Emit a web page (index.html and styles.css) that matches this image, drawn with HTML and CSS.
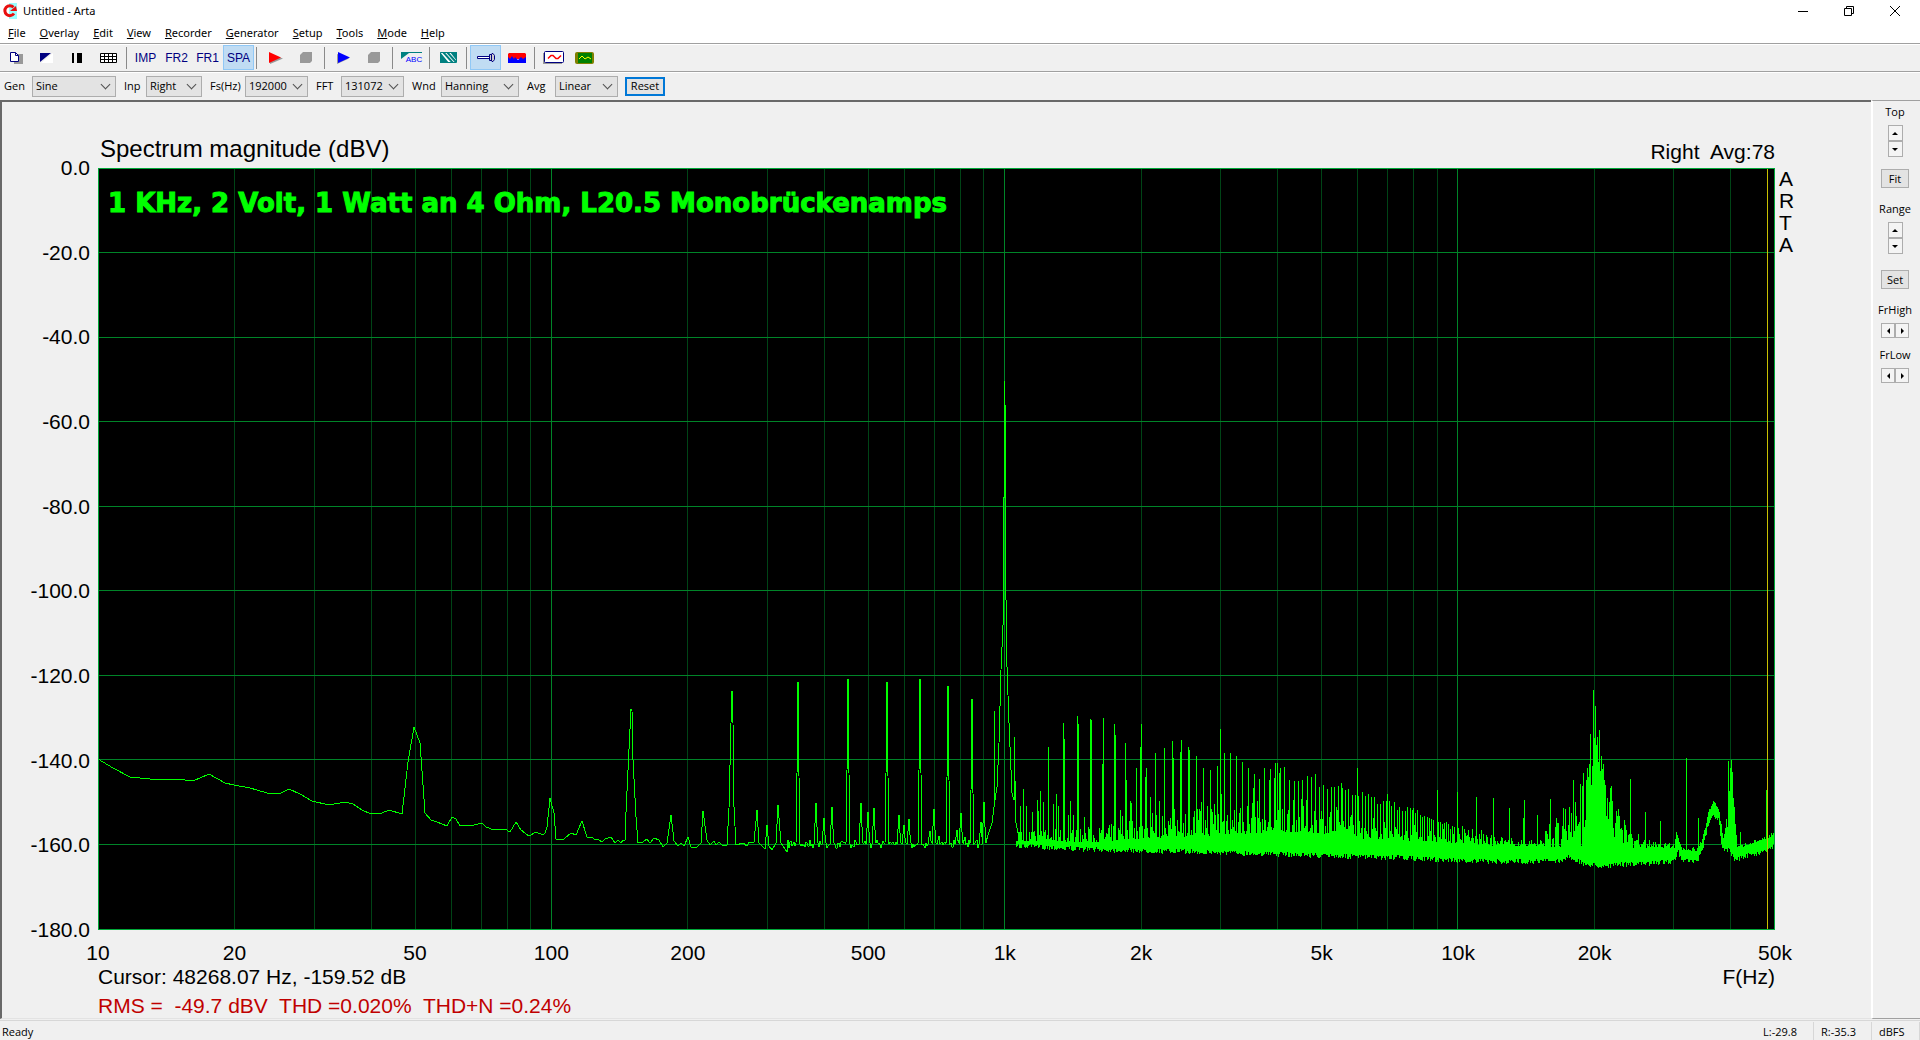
FILE: index.html
```html
<!DOCTYPE html>
<html lang="en">
<head>
<meta charset="utf-8">
<title>Untitled - Arta</title>
<link rel="stylesheet" href="styles.css">
</head>
<body>
<header class="titlebar">
  <svg class="app-icon" width="16" height="16" viewBox="0 0 16 16"><path fill="#9ff" d="M7 0h8v16H7z"/><path d="M11.500 4.200A5 5 0 1 0 12 10.500" fill="none" stroke="#e81010" stroke-width="3"/><path fill="#e81010" d="M8 8h7l-1-5z"/></svg>
  <h1>Untitled - Arta</h1>
  <div class="window-controls">
    <button aria-label="Minimize"><svg width="12" height="12" viewBox="0 0 12 12"><path d="M1 6.500h10"/></svg></button>
    <button aria-label="Restore"><svg width="12" height="12" viewBox="0 0 12 12"><path d="M1.500 3.500h7v7h-7zM3.500 3.500v-2h7v7h-2"/></svg></button>
    <button aria-label="Close"><svg width="12" height="12" viewBox="0 0 12 12"><path d="M1 1l10 10M11 1L1 11"/></svg></button>
  </div>
</header>
<nav class="menubar">
  <button><u>F</u>ile</button><button><u>O</u>verlay</button><button><u>E</u>dit</button><button><u>V</u>iew</button><button><u>R</u>ecorder</button><button><u>G</u>enerator</button><button><u>S</u>etup</button><button><u>T</u>ools</button><button><u>M</u>ode</button><button><u>H</u>elp</button>
</nav>
<div class="toolbar" role="toolbar">
  <button aria-label="Copy"><svg width="14" height="13" viewBox="0 0 14 13"><path fill="#999" d="M5 3h9v10H5z"/><path fill="#fff" stroke="#000080" d="M1.500 1.500h5l3 3v6h-8z"/><path fill="none" stroke="#000080" d="M6.500 1.500v3h3"/></svg></button>
  <button aria-label="Background"><svg width="14" height="10" viewBox="0 0 14 10"><path fill="#fff" d="M13 0v10H1z"/><path fill="#000080" d="M0 0h11L0 9z"/></svg></button>
  <button aria-label="Line width"><svg width="12" height="10" viewBox="0 0 12 10"><path d="M0 0h2v10H0zM5 0h5v10H5z"/></svg></button>
  <button aria-label="Grid"><svg width="17" height="10" viewBox="0 0 17 10"><path fill="#fff" stroke="#000" d="M.5.500h16v9H.500zM.500 3.500h16M.500 6.500h16M4.500.500v9M8.500.500v9M12.500.500v9"/></svg></button>
  <i class="sep"></i>
  <button>IMP</button><button>FR2</button><button>FR1</button><button class="on">SPA</button>
  <i class="sep"></i>
  <button aria-label="Record"><svg width="15" height="12" viewBox="0 0 15 12"><path fill="#999" d="M2 12V2l13 4.500z"/><path fill="red" d="M1 0l12 5.500L1 11z"/></svg></button>
  <button aria-label="Stop recording"><svg width="13" height="11" viewBox="0 0 13 11"><path fill="#999" d="M3 0h9v9l-2 2H0V3z"/></svg></button>
  <i class="sep"></i>
  <button aria-label="Generate"><svg width="13" height="12" viewBox="0 0 13 12"><path fill="#999" d="M0 12V2l12 4.500z"/><path fill="#00f" d="M1 0l12 5.500L1 11z"/></svg></button>
  <button aria-label="Stop generator"><svg width="13" height="11" viewBox="0 0 13 11"><path fill="#999" d="M3 0h9v9l-2 2H0V3z"/></svg></button>
  <i class="sep"></i>
  <button class="label-tool" aria-label="Caption"><svg width="21" height="12" viewBox="0 0 21 12"><path fill="#008080" d="M0 0h21v1H8L0 7z"/></svg><span>ABC</span></button>
  <i class="sep"></i>
  <button aria-label="Smoothing"><svg width="17" height="11" viewBox="0 0 17 11"><path fill="#fff" stroke="#008080" d="M.5.500h16v10H.500z"/><path fill="#008080" d="M0 0v11h9zM10 0h7v9z"/><path stroke="#008080" stroke-width="2" d="M3 0l10 11M7 0l9 10"/></svg></button>
  <i class="sep"></i>
  <button class="on" aria-label="Input"><svg width="18" height="9" viewBox="0 0 18 9"><path fill="#fff" stroke="#000080" d="M.5 3.500h12v2H.500z"/><path fill="#ccc" stroke="#000080" d="M14 1.500l1-1h1l1.500 2v4l-1.500 2h-1l-1-1h-1.500v-6zM14.500 1v7"/></svg></button>
  <button aria-label="Spectrum fill"><svg width="18" height="10" viewBox="0 0 18 10"><path fill="red" d="M1 0h16l1 1v5H0V1z"/><path fill="#00f" d="M0 4l2 2 2-3 2 3 1-2 3 3 3-3 2 2 3-2v6H0z"/></svg></button>
  <i class="sep"></i>
  <button aria-label="Signal time record"><svg width="21" height="13" viewBox="0 0 21 13"><path fill="#999" d="M0 2h19v11H0z"/><rect x="1.500" y=".5" width="19" height="11" rx="1" fill="#fff" stroke="#000080"/><path fill="none" stroke="red" stroke-width="1.500" d="M5 7.500l3-3h2l3 3h2l3-3"/></svg></button>
  <button aria-label="Oscilloscope"><svg width="19" height="12" viewBox="0 0 19 12"><rect width="19" height="12" rx="2" fill="#808000"/><rect x="3" y="1" width="14" height="10" fill="#008000"/><path fill="none" stroke="#ff0" d="M4 7l3-3 3 3 3-2 3 2"/></svg></button>
</div>
<form class="settings">
  <label for="gen">Gen</label><span class="drop"><select id="gen"><option>Sine</option></select></span>
  <label for="inp">Inp</label><span class="drop"><select id="inp"><option>Right</option></select></span>
  <label for="fs">Fs(Hz)</label><span class="drop"><select id="fs"><option>192000</option></select></span>
  <label for="fft">FFT</label><span class="drop"><select id="fft"><option>131072</option></select></span>
  <label for="wnd">Wnd</label><span class="drop"><select id="wnd"><option>Hanning</option></select></span>
  <label for="avg">Avg</label><span class="drop"><select id="avg"><option>Linear</option></select></span>
  <button class="reset" type="button">Reset</button>
</form>
<main class="workspace">
  <section class="chart">
    <div class="chart-head"><h2>Spectrum magnitude (dBV)</h2><p>Right&nbsp; Avg:78</p></div>
    <ul class="y-axis"><li>0.0</li><li>-20.0</li><li>-40.0</li><li>-60.0</li><li>-80.0</li><li>-100.0</li><li>-120.0</li><li>-140.0</li><li>-160.0</li><li>-180.0</li></ul>
    <div class="plot">
      <svg id="spectrum" viewBox="98 168 1677 762" preserveAspectRatio="none"></svg>
      <p class="caption">1 KHz, 2 Volt, 1 Watt an 4 Ohm, L20.5 Monobrückenamps</p>
    </div>
    <p class="brand">A<br>R<br>T<br>A</p>
    <div class="chart-foot">
      <ul class="x-axis"><li>10</li><li>20</li><li>50</li><li>100</li><li>200</li><li>500</li><li>1k</li><li>2k</li><li>5k</li><li>10k</li><li>20k</li><li>50k</li></ul>
      <div class="cursor"><p>Cursor: 48268.07 Hz, -159.52 dB</p><p>F(Hz)</p></div>
      <p class="readout">RMS =&nbsp; -49.7 dBV&nbsp; THD =0.020%&nbsp; THD+N =0.24%</p>
    </div>
  </section>
  <aside class="side">
    <p>Top</p>
    <div class="spin"><button aria-label="Top up"><i class="up"></i></button><button aria-label="Top down"><i class="down"></i></button></div>
    <button class="push">Fit</button>
    <p>Range</p>
    <div class="spin range"><button aria-label="Range up"><i class="up"></i></button><button aria-label="Range down"><i class="down"></i></button></div>
    <button class="push">Set</button>
    <p>FrHigh</p>
    <div class="spin across"><button aria-label="High limit down"><i class="left"></i></button><button aria-label="High limit up"><i class="right"></i></button></div>
    <p>FrLow</p>
    <div class="spin across"><button aria-label="Low limit down"><i class="left"></i></button><button aria-label="Low limit up"><i class="right"></i></button></div>
  </aside>
</main>
<footer class="status"><span>Ready</span><span>L:-29.8</span><span>R:-35.3</span><span>dBFS</span></footer>
<script src="spectrum.js"></script>
</body>
</html>
```
FILE: styles.css
```css
* { box-sizing: border-box; margin: 0; padding: 0; }
body { min-height: 100vh; display: flex; flex-direction: column; background: #f0f0f0; color: #000; font: 11px/14px "Open Sans", "Noto Sans", sans-serif; }
button { font: inherit; color: inherit; background: none; border: 0; }
ul { list-style: none; }
svg { display: block; }
i { font-style: normal; }

.titlebar { display: flex; align-items: center; height: 22px; padding-left: 2px; background: #fff; font-family: "Noto Sans", sans-serif; }
.titlebar h1 { flex: 1; padding-left: 5px; font: inherit; }
.window-controls { display: flex; padding-right: 2px; }
.window-controls button { display: flex; align-items: center; justify-content: center; width: 46px; height: 22px; }
.window-controls svg { fill: none; stroke: #000; }
.menubar { display: flex; height: 21px; padding-left: 1px; background: #fff; font-family: "Noto Sans", sans-serif; }
.menubar button { padding: 0 7px; }

.toolbar { display: flex; align-items: center; height: 28px; border-top: 1px solid #a0a0a0; box-shadow: inset 0 1px #fff; }
.toolbar button { display: flex; align-items: center; justify-content: center; width: 31px; height: 25px; color: #000080; font: 12px/14px "Liberation Sans", Arial, sans-serif; }
.toolbar .on { background: #c0dcf3; border: 1px solid #90c8f6; }
.sep { width: 1px; height: 22px; margin: 0 3px 0 2px; background: #8a8a8a; }
.toolbar .label-tool { display: grid; place-content: center; }
.label-tool svg, .label-tool span { grid-area: 1 / 1; }
.label-tool span { padding: 3px 0 0 5px; color: #00f; font-size: 8px; line-height: 9px; }

.settings { display: grid; grid-template-columns: 32px 84px 30px 56px 43px 63px 33px 63px 37px 78px 36px 63px 47px; align-items: center; height: 29px; border-top: 1px solid #a0a0a0; box-shadow: inset 0 1px #fff; }
.settings label { padding-left: 8px; }
.settings label:first-child { padding-left: 4px; }
.drop { position: relative; }
.drop::after { content: ""; position: absolute; right: 7px; top: 5px; width: 6px; height: 6px; border: solid #505050; border-width: 0 1px 1px 0; transform: rotate(45deg); pointer-events: none; }
.drop select { display: block; width: 100%; height: 21px; padding-left: 3px; appearance: none; background: #e3e3e3; border: 1px solid #adadad; border-radius: 0; color: #000; font: inherit; }
.reset { height: 19px; margin-left: 7px; background: #e3e3e3; border: 2px solid #0078d7; line-height: 14px; }

.workspace { flex: 1; display: flex; }
.chart { flex: 1; display: grid; grid-template: 66px 1fr 88px / 96px 1fr 96px; border: 1px solid #a0a0a0; border-top: 2px solid #696969; border-left: 2px solid #696969; border-right: 0; border-bottom-color: #e3e3e3; font: 21px/24px "Liberation Sans", Arial, sans-serif; }
.chart-head { grid-column: 2; display: flex; justify-content: space-between; align-items: flex-end; padding: 0 0 4px 2px; }
.chart-head h2 { padding-bottom: 2px; font: 24px/26px "Liberation Sans", Arial, sans-serif; }
.y-axis { grid-area: 2 / 1; display: flex; flex-direction: column; justify-content: space-between; padding-right: 8px; text-align: right; }
.y-axis li { display: flex; align-items: center; justify-content: flex-end; height: 0; }
.plot { position: relative; grid-area: 2 / 2; background: #000; }
.plot svg { position: absolute; width: 100%; height: 100%; shape-rendering: crispEdges; }
.plot path { fill: none; stroke: #00ff00; vector-effect: non-scaling-stroke; }
.plot .minor { stroke: #004416; }
.plot .major { stroke: #008428; }
.plot .frame { stroke: #00a838; }
.plot .marker { stroke: #c8c000; }
.caption { position: relative; padding: 18px 0 0 10px; color: #00ff00; font: bold 26px/34px "DejaVu Sans", sans-serif; -webkit-text-stroke: 1px #00ff00; }
.brand { grid-area: 2 / 3; padding-left: 4px; line-height: 22px; }
.chart-foot { grid-column: 2; padding-top: 11px; }
.x-axis { display: grid; grid-template-columns: 301fr 398fr 301fr 301fr 398fr 301fr 301fr 398fr 301fr 301fr 398fr 0fr; }
.x-axis li { display: flex; justify-content: center; width: 0; }
.cursor { display: flex; justify-content: space-between; }
.readout { padding-top: 5px; color: #c00000; }

.side { display: flex; flex-direction: column; align-items: center; width: 49px; padding: 4px 3px 0 0; border: solid #a0a0a0; border-width: 1px 0; border-left: 2px solid #fff; }
.side p { height: 20px; }
.spin { display: flex; flex-direction: column; margin-bottom: 12px; }
.spin.range { margin-bottom: 16px; }
.spin.across { flex-direction: row; margin-bottom: 10px; }
.spin button { display: flex; align-items: center; justify-content: center; width: 15px; height: 16px; background: #f4f4f4; border: 1px solid #adadad; }
.spin.across button { width: 14px; height: 15px; }
.spin i { border: 3px solid transparent; }
.spin .up { border-top: 0; border-bottom-color: #000; }
.spin .down { border-bottom: 0; border-top-color: #000; }
.spin .left { border-left: 0; border-right-color: #000; }
.spin .right { border-right: 0; border-left-color: #000; }
.push { width: 28px; height: 19px; margin-bottom: 14px; background: #e3e3e3; border: 1px solid #adadad; line-height: 14px; }

.status { display: flex; align-items: center; height: 20px; margin-top: 1px; border-top: 1px solid #d7d7d7; }
.status span { width: 58px; height: 18px; padding-left: 7px; border-right: 1px solid #d7d7d7; line-height: 20px; }
.status span:first-child { flex: 1; padding-left: 2px; border: 0; }
.status span:last-child { width: 48px; }
```
FILE: spectrum.js
```js
const svg = document.getElementById('spectrum');
const LEFT = 98, RIGHT = 1774, TOP = 168, BOTTOM = 929;

function path(d, cls) {
  const p = document.createElementNS('http://www.w3.org/2000/svg', 'path');
  p.setAttribute('d', d);
  p.setAttribute('class', cls);
  svg.append(p);
}
const xOf = f => Math.round(LEFT + (RIGHT - LEFT) * Math.log10(f / 10) / Math.log10(5000)) + 0.5;

// Grid
let minor = '', major = '';
for (let dec = 10; dec <= 10000; dec *= 10) {
  for (let k = 1; k < 10 && k * dec < 50000; k++) {
    const line = `M${xOf(k * dec)} ${TOP}V${BOTTOM}`;
    if (k === 1) major += line; else minor += line;
  }
}
for (let i = 1; i < 9; i++) major += `M${LEFT} ${Math.floor(TOP + i * 84.55) + 0.5}H${RIGHT}`;
path(minor, 'minor');
path(major, 'major');

// Repeatable noise
let seed = 7;
const rnd = () => (seed = (seed * 16807) % 2147483647) / 2147483647;
const lerp = (pts, x) => {
  let i = 1;
  while (i < pts.length - 1 && pts[i][0] < x) i++;
  const [a, b] = [pts[i - 1], pts[i]];
  return a[1] + (b[1] - a[1]) * (x - a[0]) / (b[0] - a[0]);
};
const pairs = s => s.trim().split(/\s+/).map(p => p.split(',').map(Number));

// Low frequencies: single line
const low = pairs(`98,759 113,768 130,777 150,779 177,779 193,781 209,774 225,783 234,785 250,788 267,793 279,794
289,789 300,794 312,801 329,805 345,802 353,804 362,810 371,814 382,813 389,810 402,814 408,762 414,727 420,743
425,813 431,820 437,822 447,826 452,817 456,819 460,826 474,825 482,823 486,827 494,830 498,829 502,830 505,829
510,832 516,822 521,830 529,836 536,832 543,835 545,833 547,827 550,798 554,813 556,839 564,839 571,833 576,835
582,821 587,837 592,837 595,840 598,839 602,842 605,839 611,837 615,843 618,840 621,843 623,840 625,841 626,812
629,749 631,709 632,711 633,760 636,817 638,843 643,842 647,839 650,843 654,838 659,840 663,847 667,843 671,815
674,841 678,846 681,843 684,846 688,837 691,847 697,847 701,843 703,811 707,840 710,845 714,841 716,845 719,842
722,845 727,845 729,808 731,723 732,691 733,723 734,807 736,845 743,843 747,846 749,842 754,842 757,810 759,843
765,849 767,825 769,846 772,850 776,843 778,805 781,843 787,852`);
let d = 'M' + low.map(p => p.join(' ')).join('L');

const mid = pairs(`798,682 816,803 824,818 832,807 848,679 861,803 868,812 874,808 887,682 899,815 904,825 909,819
920,679 930,831 934,809 939,836 948,686 957,830 961,813 965,837 972,699 981,822 984,802`);
let x = 788;
for (const [px, py] of mid) {
  for (; x < px - 2; x++) d += `L${x} ${Math.round(844 + (rnd() - 0.5) * 9)}`;
  const w = py < 700 ? 2 : 1;
  d += `L${px - 2} 844`;
  if (w === 2) d += `L${px - 1} ${py + 92}`;
  d += `L${px} ${py}V${py + 8}`;
  d += w === 2 ? `L${px + 1} ${py + 94}L${px + 2} 844` : `L${px + 2} 843`;
  x = px + 3;
}
d += 'L986 842L988 835L992 823L994 807V711L995 800L997 787L999 743L1001 670';
d += 'L1003 625V497L1004 497V381L1005 405V598L1006 600V652L1007 667L1009 723L1012 793L1014 800V737L1016 823L1020 842';
path(d, 'trace');

// Upper frequencies: one bar per column
const floorTop = pairs(`1015,841 1100,842 1150,838 1200,836 1240,834 1310,832 1345,838 1400,840 1450,843 1500,846
1560,847 1640,842 1652,848 1674,848 1676,832 1679,842 1682,850 1697,851 1701,843 1704,832 1708,815 1711,808 1713,801
1716,806 1718,809 1721,827 1723,839 1725,829 1726,819 1727,828 1737,848 1741,848 1753,843 1766,839 1773,835`);
const floorBottom = pairs(`1015,846 1100,850 1200,852 1300,855 1400,858 1470,861 1500,862 1560,861 1568,857 1576,860 1582,864
1600,866 1640,864 1674,861 1678,852 1681,861 1697,862 1703,847 1708,824 1712,814 1715,820 1718,818 1722,850 1725,850
1728,850 1735,860 1742,857 1760,853 1766,850 1773,846`);
const amp = pairs(`1015,10 1100,16 1150,26 1200,36 1330,32 1400,18 1460,13 1520,8 1560,10 1640,8 1680,4 1773,3`);
const peaks = new Map(pairs(`1020,806 1023,789 1026,806 1032,812 1037,800 1038,811 1040,791 1043,802 1048,747 1053,804
1056,794 1058,806 1063,723 1064,739 1068,815 1070,801 1073,815 1077,716 1078,724 1084,817 1090,719 1091,720 1102,764
1103,718 1109,825 1114,724 1115,735 1120,810 1122,816 1125,743 1126,780 1130,801 1131,803 1136,768 1140,747 1141,724
1145,777 1146,768 1150,797 1152,813 1155,753 1159,801 1164,748 1168,821 1172,741 1173,758 1180,752 1181,740 1188,747
1189,750 1196,756 1200,811 1203,768 1207,806 1210,770 1214,804 1217,766 1220,729 1221,794 1224,753 1227,815 1230,753
1236,756 1242,762 1248,768 1253,788 1254,774 1259,779 1264,768 1269,780 1270,769 1274,778 1275,763 1277,763 1279,773
1280,768 1284,767 1289,780 1293,800 1294,781 1298,781 1302,780 1307,776 1311,777 1315,774 1319,787 1323,785 1327,789
1331,787 1334,787 1338,786 1341,783 1342,788 1345,790 1348,789 1352,795 1355,795 1357,768 1358,796 1362,792 1365,796
1368,794 1371,797 1374,797 1377,804 1380,804 1383,801 1386,801 1387,794 1389,801 1391,806 1394,802 1397,810 1399,807
1402,811 1405,811 1407,807 1410,808 1412,810 1413,808 1415,813 1417,810 1420,815 1422,817 1424,816 1427,817 1429,818
1431,819 1433,820 1437,790 1438,822 1440,822 1442,824 1444,823 1446,822 1448,824 1450,829 1452,826 1454,827 1457,792
1458,828 1462,826 1464,829 1468,830 1472,829 1476,797 1479,834 1481,830 1487,837 1493,798 1501,837 1504,841 1509,808
1514,844 1523,818 1524,800 1529,841 1537,815 1540,840 1545,831 1546,831 1547,834 1549,824 1550,799 1553,838 1555,827
1556,818 1557,823 1558,823 1562,826 1563,808 1564,829 1565,809 1566,831 1568,825 1569,807 1570,832 1571,813 1573,780
1574,831 1575,802 1576,816 1577,826 1578,824 1579,822 1580,784 1582,786 1583,773 1660,821 1668,844 1676,832 1677,835
1678,838 1686,758 1698,818 1728,761 1729,791 1730,768 1731,760 1732,772 1733,798 1734,807 1735,824 1736,835 1740,832 1766,790`));
// Column tops round 20 kHz, as offsets in thirds from y = 680
[440, 420, 300, 264, 291, 252, 162, 315, 258, 30, 174, 78, 195, 171, 246, 150, 273, 228, 267, 252, 300, 315, 408, 354,
  417, 366, 324, 318, 363, 444, 471, 429, 393, 408, 387, 408, 447, 444, 450, 489, 420, 435, 450, 486, 465, 462, 297,
  462, 474, 504, 483, 483, 480, 480, 462, 495, 501, 492, 492, 486, 480, 396, 504]
  .forEach((v, i) => peaks.set(1584 + i, 680 + v / 3));

let bars = '';
for (x = 1016; x < RIGHT; x++) {
  const noise = lerp(floorTop, x) - rnd() ** 2 * lerp(amp, x);
  const top = Math.round(peaks.has(x) ? peaks.get(x) : noise);
  const bottom = Math.round(lerp(floorBottom, x) + (rnd() - 0.5) * 5);
  bars += `M${x + 0.5} ${top}V${Math.max(bottom, top + 4)}`;
}
path(bars, 'trace');
path(`M1767.5 ${TOP}V${BOTTOM}`, 'marker');
path(`M${LEFT + 0.5} ${TOP + 0.5}H${RIGHT + 0.5}V${BOTTOM + 0.5}H${LEFT + 0.5}Z`, 'frame');
```
